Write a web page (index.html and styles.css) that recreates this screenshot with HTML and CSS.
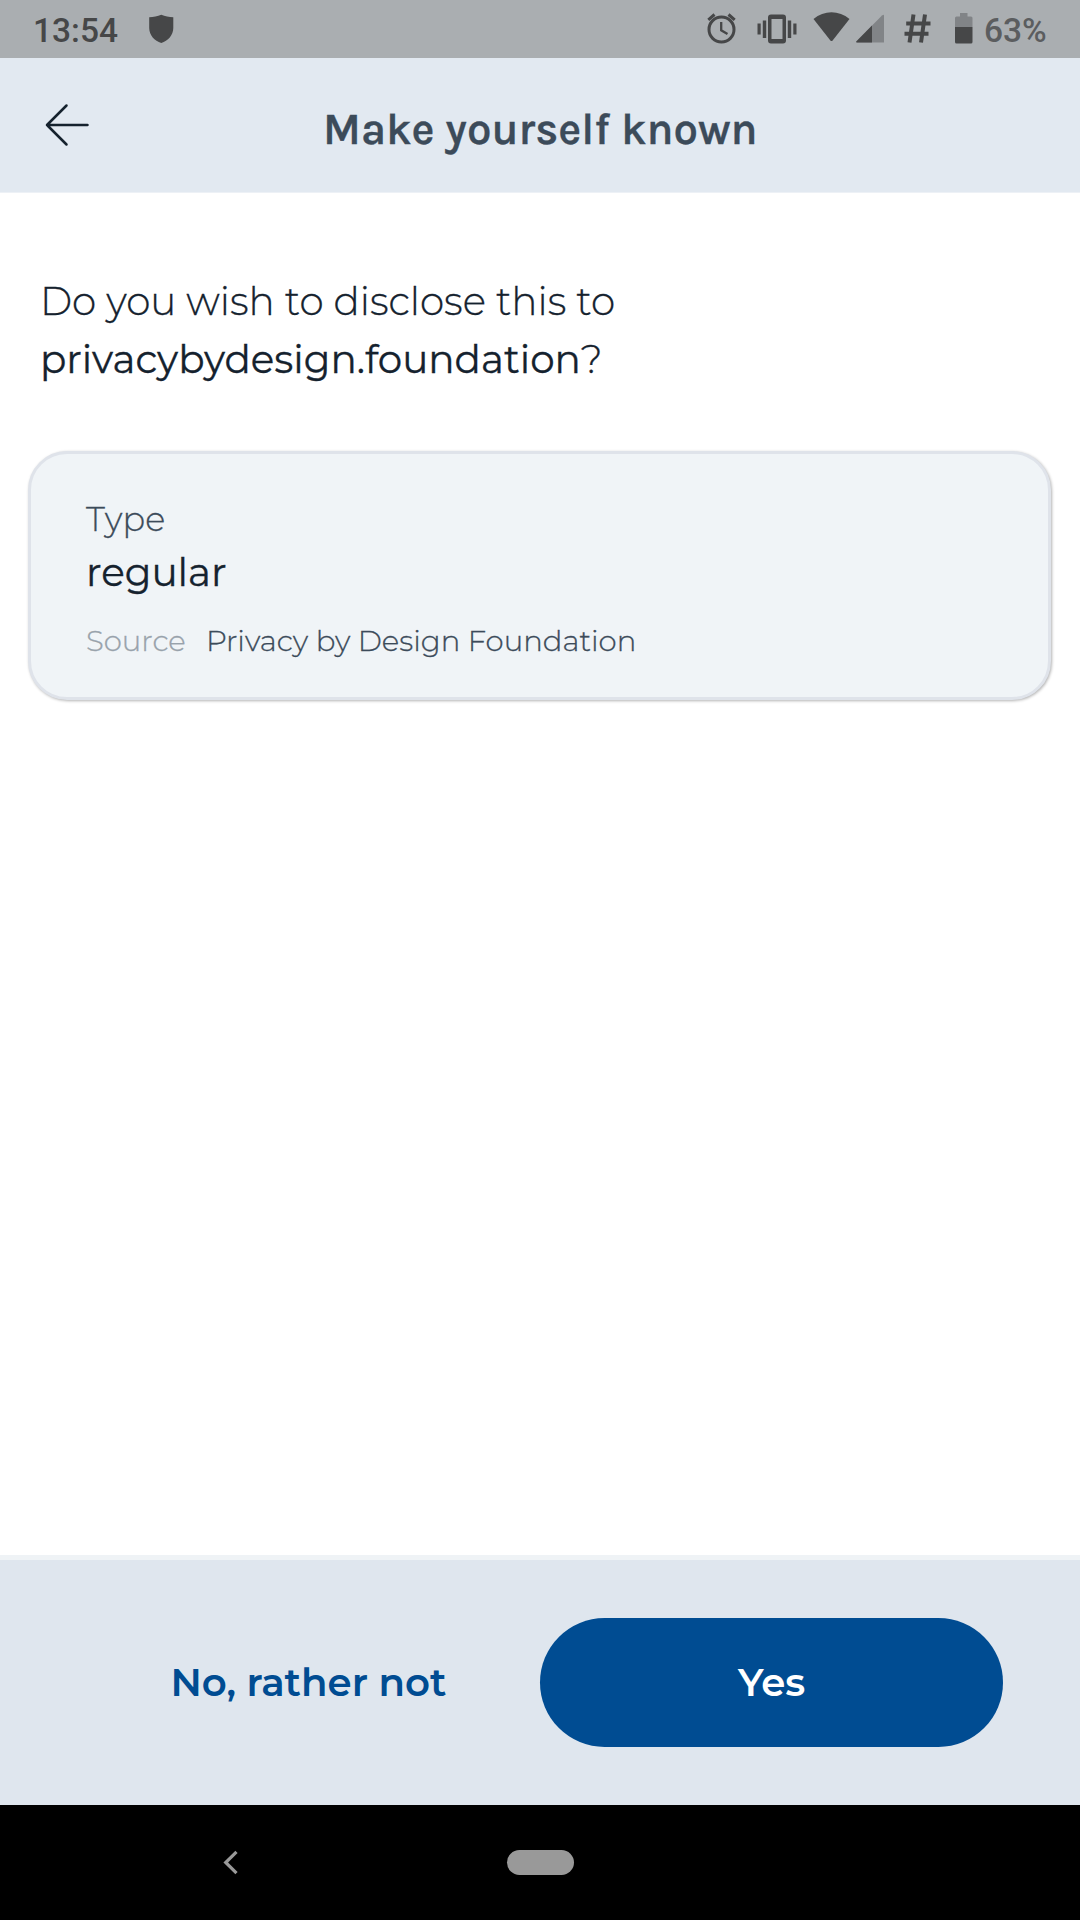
FILE: index.html
```html
<!DOCTYPE html>
<html lang="en">
<head>
<meta charset="utf-8">
<title>Make yourself known</title>
<link rel="stylesheet" href="styles.css">
</head>
<body>
<div class="screen">
  <div class="status">
    <span class="clock">13:54</span>
    <svg class="shield" width="26" height="30" viewBox="0 0 26 30"><path d="M13.300 .8C17 2.500 21 3.200 25.300 3.200V14C25.300 21 20 27 13.300 29C6.500 27 1.200 21 1.200 14V3.200C5.500 3.200 9.500 2.500 13.300 .8Z"/></svg>
    <div class="status-icons">
      <svg width="30" height="32" viewBox="0 0 30 32"><g fill="none" stroke="#464748" stroke-width="3"><circle cx="14.500" cy="17.500" r="12.500"/><path d="M1.300 7.800L7.500 2.500M27.700 7.800L21.500 2.500"/><path d="M14.200 10V18.300L20.500 22" stroke-width="2.300"/></g></svg>
      <svg width="40" height="30" viewBox="0 0 40 30"><path fill-rule="evenodd" d="M14 .5H26Q29 .5 29 3.500V26.500Q29 29.500 26 29.500H14Q11 29.500 11 26.500V3.500Q11 .5 14 .5ZM14.500 5V25H25.500V5Z"/><path d="M.5 9.500h3.200v11H.5zM5.800 6.500H9.200v17.500H5.800zM30.800 6.500h3.400v17.500h-3.400zM36.300 9.500h3.200v11h-3.200z"/></svg>
      <svg width="37" height="30" viewBox="0 0 37 30"><path d="M.5 7C11-2 26-2 36.500 7L19.600 28.500Q18.500 29.500 17.400 28.500Z"/></svg>
      <svg class="signal" width="28" height="29" viewBox="0 0 28 29"><path d="M28 1.500V28.500H1Q-.5 28.500 .5 27.300L26 1.500Q28 0 28 1.500Z" fill="#818487"/><path d="M16 11.500V28.500H1Q-.5 28.500 .5 27.300Z"/></svg>
      <svg class="hash" width="27" height="29" viewBox="0 0 27 29"><path d="M9.500 .5L5.500 28.500M21 .5L17 28.500M2.200 9.500H26.500M.5 19.700H24.500" fill="none" stroke="#464748" stroke-width="4"/></svg>
      <svg class="battery" width="18" height="31" viewBox="0 0 18 31"><path d="M5 0H12.500V3.500H16Q17.500 3.500 17.500 5V14H0V5Q0 3.500 1.500 3.500H5Z" fill="#818487"/><path d="M0 14H17.500V29Q17.500 30.500 16 30.500H1.500Q0 30.500 0 29Z"/></svg>
      <span class="percent">63%</span>
    </div>
  </div>
  <header class="header">
    <svg class="back" width="46" height="44" viewBox="0 0 46 44"><path d="M23.500 2.500L4 22L23.500 41.500M4 22H44.500" fill="none" stroke="#15222e" stroke-width="2.500" stroke-linecap="round" stroke-linejoin="round"/></svg>
    <h1 class="title">Make yourself known</h1>
  </header>
  <main class="content">
    <p class="question"><span class="ask">Do you wish to disclose this to</span><br><span class="verifier">privacybydesign.foundation</span>?</p>
    <section class="card">
      <div class="label">Type</div>
      <div class="value">regular</div>
      <div class="origin"><span class="source">Source</span><span class="issuer">Privacy by Design Foundation</span></div>
    </section>
  </main>
  <footer class="actions">
    <button class="button decline"><span class="decline-text">No, rather not</span></button>
    <button class="button accept"><span class="accept-text">Yes</span></button>
  </footer>
  <nav class="navbar">
    <svg class="nav-back" width="16" height="26" viewBox="0 0 16 26"><path d="M13.500 1.800L2.700 12.500L13.500 23.200" fill="none" stroke="#999" stroke-width="3.200"/></svg>
    <span class="home"></span>
  </nav>
</div>
</body>
</html>
```
FILE: styles.css
```css
* { box-sizing: border-box; }
body { margin: 0; font-family: Montserrat, Inter, sans-serif; color: #15222e; }
.screen { width: 1080px; height: 1920px; display: flex; flex-direction: column; background: #fff; }

.status { height: 58px; background: #aaaeb1; display: flex; align-items: flex-start; padding: 0 34px 0 33px; font-family: Roboto, sans-serif; color: #464748; }
.status svg { fill: #464748; flex: none; display: block; }
.clock { font-size: 33.500px; line-height: 40px; padding-top: 11px; width: 115px; font-weight: 500; white-space: nowrap; }
.shield { margin-top: 14px; }
.status-icons { margin-left: auto; display: flex; align-items: flex-start; padding-top: 12px; }
.status-icons svg { margin-top: 2px; }
.status-icons svg:first-child { margin: 0 20px 0 0; }
.status-icons svg:nth-child(3) { margin: 0 6px 0 16px; }
.status-icons .hash { margin-left: 20px; }
.status-icons .battery { margin: 1px 0 0 24px; }
.percent { font-size: 33.500px; font-weight: 500; line-height: 40px; width: 62px; margin: -1px 0 0 11px; color: #5b5d5f; white-space: nowrap; }

.header { height: 135px; background: #e2e9f1; display: flex; border-bottom: 1px solid #edf1f6; }
.back { margin: 45px 0 0 43px; }
.title { margin: 48px 0 0 234px; font: 600 43.700px/48px Karla, Inter, sans-serif; color: #3c4b5a; white-space: nowrap; -webkit-text-stroke: .3px; }

.content { flex: 1; padding: 80px 29px 0 28px; -webkit-text-stroke: .3px; }
.question { margin: -1px 0 63px 12px; font-size: 38.900px; line-height: 58px; font-weight: 300; white-space: nowrap; }
.verifier { font-weight: 400; }
.card { height: 248.500px; border: 3px solid #dfe3ea; border-radius: 39px; background: #f0f4f7; padding: 45px 55px; box-shadow: 1px 1px 3px rgba(0,0,0,.3); white-space: nowrap; }
.label { font-size: 33.500px; line-height: 40px; font-weight: 300; color: #3c4b5a; }
.value { font-size: 39px; line-height: 46px; margin-top: 10px; }
.origin { display: flex; font-size: 29.150px; line-height: 34px; margin-top: 29px; font-weight: 300; }
.source { width: 120px; color: #98a2ab; }
.issuer { color: #3c4b5a; }

.actions { height: 250px; border-top: 5px solid #eff3f6; background: #dfe6ee; display: flex; padding: 57.500px 77px 0; }
.button { width: 463px; height: 129.500px; border: 0; border-radius: 65px; background: none; font: 600 38.700px/46px Montserrat, Inter, sans-serif; color: #004c92; padding: 2px 0 0; }
.accept { background: #004c92; color: #fff; }

.navbar { height: 115px; background: #000; display: flex; padding-top: 45px; }
.nav-back { margin-left: 223px; }
.home { width: 67px; height: 25px; margin-left: 268px; border-radius: 13px; background: #999; }
```
